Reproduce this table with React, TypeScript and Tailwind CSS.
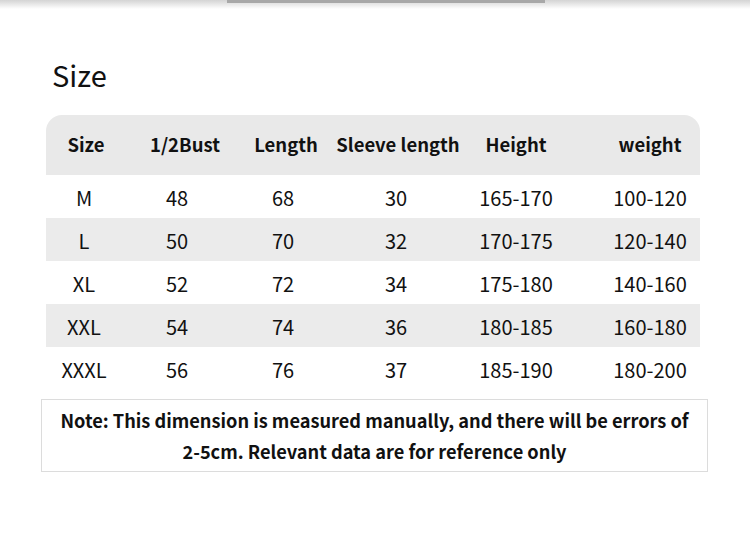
const rows = [
  ['M', '48', '68', '30', '165-170', '100-120'],
  ['L', '50', '70', '32', '170-175', '120-140'],
  ['XL', '52', '72', '34', '175-180', '140-160'],
  ['XXL', '54', '74', '36', '180-185', '160-180'],
  ['XXXL', '56', '76', '37', '185-190', '180-200'],
]

const headers = ['Size', '1/2Bust', 'Length', 'Sleeve length', 'Height', 'weight']

const cols = 'grid grid-cols-[80px_110px_100px_124px_112px_128px] items-center text-center whitespace-nowrap'

// small per-column nudges so header and data line up like the original
const headPad = ['', 'pl-[8px]', '', '', '', 'pl-[28px]']
const cellPad = ['pr-[4px]', 'pr-[8px]', 'pr-[6px]', 'pr-[4px]', '', 'pl-[28px]']

export default function App() {
  return (
    <div
      className="w-[750px] h-[539px] bg-white text-[#111] overflow-hidden"
      style={{ fontFamily: '"Noto Sans CJK SC", "Noto Sans", sans-serif' }}
    >
      {/* top strip */}
      <div className="h-[9px] bg-gradient-to-b from-[#d4d4d4] to-white">
        <div className="ml-[227px] w-[318px] h-[3px] bg-[#a8a8a8]" />
      </div>

      <h1 className="ml-[52px] mt-[45px] text-[29px] leading-[40px] font-normal">Size</h1>

      <div className="ml-[46px] mt-[21px] w-[654px]">
        <div className={`${cols} h-[60px] rounded-t-[16px] bg-[#e9e9e9] text-[18.5px] font-bold`}>
          {headers.map((h, i) => (
            <div key={h} className={headPad[i]}>{h}</div>
          ))}
        </div>
        {rows.map((r, ri) => (
          <div
            key={r[0]}
            className={`${cols} h-[43px] pt-[2px] text-[20px] ${ri % 2 === 1 ? 'bg-[#ebebeb]' : 'bg-white'}`}
          >
            {r.map((c, i) => (
              <div key={i} className={cellPad[i]}>{c}</div>
            ))}
          </div>
        ))}
      </div>

      <div className="ml-[41px] mt-[9px] w-[667px] h-[73px] border border-[#dcdcdc] flex flex-col items-center justify-center text-[18.2px] font-bold leading-[31px] whitespace-nowrap">
        <p>Note: This dimension is measured manually, and there will be errors of</p>
        <p>2-5cm. Relevant data are for reference only</p>
      </div>
    </div>
  )
}
